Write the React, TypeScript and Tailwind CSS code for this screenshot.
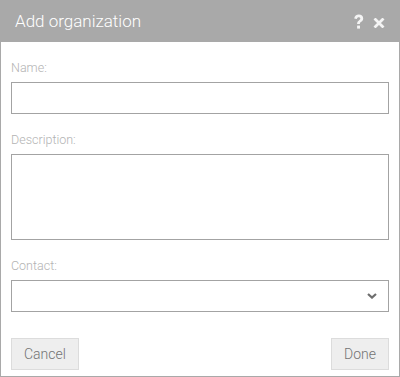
import React from "react";

export default function App() {
  return (
    <div
      className="w-[400px] h-[377px] bg-white flex flex-col"
      style={{ fontFamily: "Roboto, 'Liberation Sans', sans-serif" }}
    >
      <div className="h-[42px] bg-[#a9a9a9] flex items-center pl-[15px] pr-[15px] shrink-0">
        <div className="text-[17px] font-light text-white leading-none flex-1">Add organization</div>
        <svg width="11" height="16" viewBox="0 0 11 16" className="mr-[9px] mt-[1px]">
          <path
            d="M1.2 4.6 C1.6 1.8 3.4 0.6 5.8 0.6 C8.4 0.6 10.2 2.2 10.2 4.4 C10.2 6.3 9.1 7.1 7.9 7.9 C7 8.5 6.9 8.9 6.9 10 L4.1 10 C4.1 8.3 4.5 7.3 5.9 6.4 C7 5.7 7.3 5.3 7.3 4.6 C7.3 3.8 6.7 3.2 5.7 3.2 C4.7 3.2 4.1 3.8 3.9 5 Z"
            fill="#f4f4f4"
          />
          <rect x="4.1" y="11.6" width="2.9" height="3" fill="#f4f4f4" />
        </svg>
        <svg width="12" height="10" viewBox="0 0 12 10" className="mt-[4px]">
          <path d="M1.5 0.5 L10.5 9.5 M10.5 0.5 L1.5 9.5" stroke="#f4f4f4" strokeWidth="2.8" />
        </svg>
      </div>
      <div className="flex-1 flex flex-col border-x border-b border-[#a9a9a9] px-[10px]">
        <div className="mt-[18px] h-[16px] text-[12.5px] leading-[16px] font-light text-[#b3b3b3]">Name:</div>
        <div className="mt-[6px] h-[32px] border border-[#a3a3a3]" />
        <div className="mt-[18px] h-[16px] text-[12.5px] leading-[16px] font-light text-[#b3b3b3]">Description:</div>
        <div className="mt-[6px] h-[86px] border border-[#a3a3a3]" />
        <div className="mt-[18px] h-[16px] text-[12.5px] leading-[16px] font-light text-[#b3b3b3]">Contact:</div>
        <div className="mt-[6px] h-[32px] border border-[#a3a3a3] flex items-center justify-end pr-[11px]">
          <svg width="10" height="6" viewBox="0 0 10 6">
            <path d="M1 1 L5 4.6 L9 1" stroke="#6e6e6e" strokeWidth="2.2" fill="none" />
          </svg>
        </div>
        <div className="mt-[26px] flex justify-between">
          <button className="h-[32px] px-3 bg-[#eeeeee] border border-[#dcdcdc] text-[14px] font-light text-[#737373]">
            Cancel
          </button>
          <button className="h-[32px] px-3 bg-[#eeeeee] border border-[#dcdcdc] text-[14px] font-light text-[#737373]">
            Done
          </button>
        </div>
      </div>
    </div>
  );
}
